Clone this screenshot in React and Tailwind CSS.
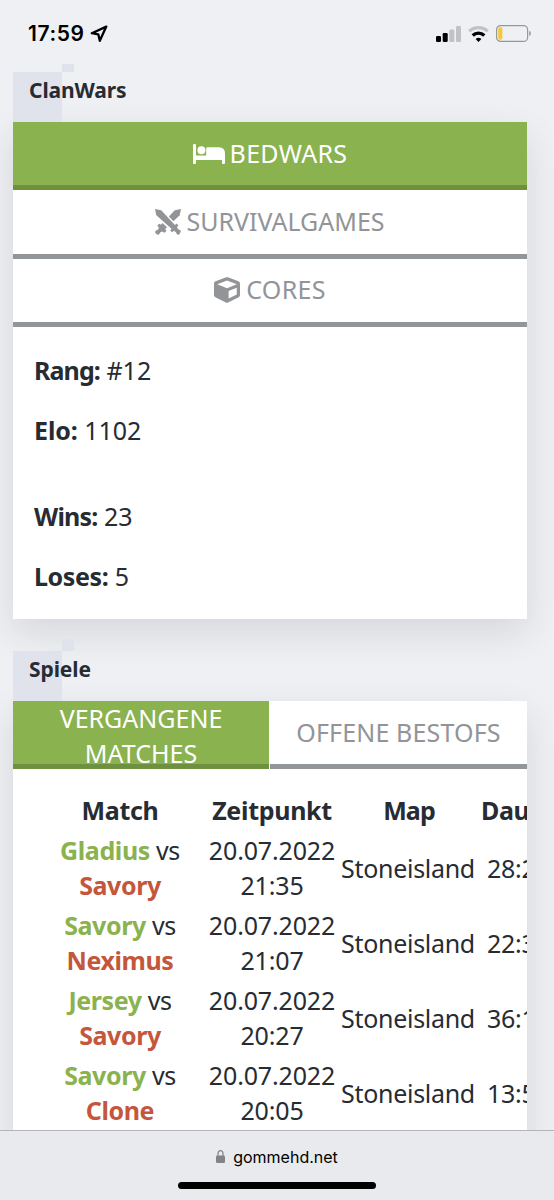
import React from 'react';
import { FaCube } from 'react-icons/fa';

const stats = [
    { label: 'Rang:', value: '#12', labelClass: 'tracking-[-0.9px]' },
    { label: 'Elo:', value: '1102', labelClass: 'tracking-[-0.1px]' },
    { label: 'Wins:', value: '23', labelClass: 'tracking-[-0.8px]' },
    { label: 'Loses:', value: '5', labelClass: 'tracking-[-0.4px]' },
];

const matches = [
    { winner: 'Gladius', loser: 'Savory', date: '20.07.2022', time: '21:35', map: 'Stoneisland', duration: '28:20' },
    { winner: 'Savory', loser: 'Neximus', date: '20.07.2022', time: '21:07', map: 'Stoneisland', duration: '22:33' },
    { winner: 'Jersey', loser: 'Savory', date: '20.07.2022', time: '20:27', map: 'Stoneisland', duration: '36:19' },
    { winner: 'Savory', loser: 'Clone', date: '20.07.2022', time: '20:05', map: 'Stoneisland', duration: '13:50' },
];

const BedIcon = () => (
    <svg className="h-5 w-8 shrink-0" viewBox="0 0 32 20" fill="currentColor">
        <path d="M0 1 Q0 0 1 0 H2 Q3 0 3 1 V11.5 H13.2 V4.2 Q13.2 3.2 14.2 3.2 H26 Q32 3.4 32 9.5 V19 Q32 20 31 20 H30 Q29 20 29 19 V16 H3 V19 Q3 20 2 20 H1 Q0 20 0 19 Z" />
        <circle cx="8.4" cy="6.3" r="4" />
    </svg>
);

const SwordsIcon = () => (
    <svg className="h-[26px] w-[26px] shrink-0" viewBox="0 0 26 26" fill="currentColor">
        <path d="M0 0 L6.2 1.2 L18.5 14.5 L20 16 L21.5 14.5 L23.3 16.3 L21.9 18.6 L23.6 20.4 L26 21.8 L25.2 23.8 L24 25.8 L22.2 25.6 L20.8 23.3 L19 21.7 L17 23.3 L15.2 21.5 L16.5 19.8 L14.8 18.2 L1.3 6.2 Z" />
        <path d="M26 0 L19.8 1.2 L13.9 7.6 L18.4 12.2 L24.7 6.2 Z" />
        <path d="M7.4 14 L12 18.3 L10.2 19.9 L11.4 22 L9.6 23.8 L7 22.4 L5.2 23.6 L3.8 25.8 L2 25.6 L0.2 23.8 L0.4 22 L2.7 20.7 L4 19 L2.3 16.6 L4.2 14.7 L6 15.7 Z" />
    </svg>
);

const StatusBar = () => (
    <div className="flex h-16 shrink-0 items-center justify-between pt-[3px] pr-[23px] pl-7 text-black">
        <div className="flex items-center gap-[5px]">
            <span className="font-[Inter,sans-serif] text-[21px] font-semibold tracking-[0.6px]">17:59</span>
            <svg className="h-[18px] w-[18px]" viewBox="0 0 18 18" fill="none" stroke="currentColor" strokeWidth="2.3" strokeLinejoin="round">
                <path d="M16.3 1.6 L1.8 8.2 L8.3 9.3 L9.8 15.8 Z" />
            </svg>
        </div>
        <div className="flex items-center">
            <svg className="h-4 w-[25px]" viewBox="0 0 25 16">
                <rect x="0" y="10" width="5" height="6" rx="1.2" />
                <rect x="6.7" y="7" width="5" height="9" rx="1.2" />
                <rect x="13.3" y="3.5" width="5" height="12.5" rx="1.2" fill="#c1c2c4" />
                <rect x="20" y="0" width="5" height="16" rx="1.2" fill="#c1c2c4" />
            </svg>
            <svg className="ml-[7px] h-4 w-[21px]" viewBox="0 0 21 16" fill="none" strokeWidth="3.3">
                <path d="M1.3 5.4 A13.2 13.2 0 0 1 19.7 5.4" stroke="#c1c2c4" />
                <path d="M4.7 9.5 A8.3 8.3 0 0 1 16.3 9.5" stroke="#000" />
                <path d="M10.5 16 L7.6 13 A4.4 4.4 0 0 1 13.4 13 Z" fill="#000" stroke="none" />
            </svg>
            <svg className="ml-[7px] h-[17px] w-[35px]" viewBox="0 0 35 17">
                <rect x="0.6" y="0.6" width="31" height="15.8" rx="4" fill="none" stroke="#97989b" strokeWidth="1.2" />
                <rect x="2.2" y="2.3" width="4.2" height="12.4" rx="1.8" fill="#f5c83c" />
                <path d="M33.2 5.8 A3 3 0 0 1 33.2 11.2 Z" fill="#97989b" />
            </svg>
        </div>
    </div>
);

const SectionTitle = ({ children }) => (
    <div className="relative flex h-[62px] items-center pl-4">
        <span className="absolute bottom-0 left-0 h-[50px] w-[49px] bg-[#e0e3eb]" />
        <span className="absolute top-0 left-[49px] h-3 w-3 bg-[#e0e3eb]" />
        <h2 className="relative text-[21px] font-bold tracking-[-0.1px]">{children}</h2>
    </div>
);

const Tab = ({ active = false, children }) => (
    <button
        className={
            active
                ? 'flex h-[68.3px] w-full items-center justify-center gap-[5px] border-b-[5px] border-[#6f903f] bg-[#8ab24f] text-white'
                : 'flex h-[68.3px] w-full items-center justify-center gap-[5px] border-b-[5px] border-[#939699] bg-white text-[#929497]'
        }
    >
        {children}
    </button>
);

const ClanWars = () => (
    <section>
        <SectionTitle>ClanWars</SectionTitle>
        <div className="h-[497px] bg-white shadow-[0_14px_34px_rgba(40,44,60,0.12)]">
            <Tab active>
                <BedIcon />
                <span className="tracking-[0.3px]">BEDWARS</span>
            </Tab>
            <Tab>
                <SwordsIcon />
                <span>SURVIVALGAMES</span>
            </Tab>
            <Tab>
                <FaCube className="h-[26px] w-[26px]" />
                <span className="pl-[1px] tracking-[0.3px]">CORES</span>
            </Tab>
            <div className="flex flex-col gap-[25px] pt-[26px] pl-[21px] leading-[35px]">
                {stats.map((stat) => (
                    <p key={stat.label} className={stat.label === 'Wins:' ? 'mt-[26px]' : ''}>
                        <b className={stat.labelClass}>{stat.label}</b> {stat.value}
                    </p>
                ))}
            </div>
        </div>
    </section>
);

const Games = () => (
    <section className="mt-[19.5px]">
        <SectionTitle>Spiele</SectionTitle>
        <div className="h-[900px] overflow-hidden bg-white shadow-[0_14px_34px_rgba(40,44,60,0.12)]">
            <div className="grid grid-cols-[256px_257px] gap-[1px] leading-[35px]">
                <Tab active>
                    <span className="w-[200px] pt-2">VERGANGENE MATCHES</span>
                </Tab>
                <Tab>
                    <span className="tracking-[0.15px]">OFFENE BESTOFS</span>
                </Tab>
            </div>
            <table className="mt-[22px] ml-[21px] w-[590px] table-fixed border-collapse text-center leading-[35px]">
                <colgroup>
                    <col className="w-[172px]" />
                    <col className="w-[132px]" />
                    <col className="w-[140px]" />
                    <col className="w-[146px]" />
                </colgroup>
                <thead>
                    <tr className="h-10">
                        <th className="tracking-[-0.3px]">Match</th>
                        <th className="tracking-[-0.3px]">Zeitpunkt</th>
                        <th className="pl-0.5 tracking-[-0.9px]">Map</th>
                        <th className="pl-[3px] text-left tracking-[-0.4px]">Dauer</th>
                    </tr>
                </thead>
                <tbody>
                    {matches.map((match) => (
                        <tr key={match.time} className="h-[75px]">
                            <td className="tracking-[-0.4px]">
                                <b className="text-[#8ab24f]">{match.winner}</b> vs
                                <br />
                                <b className="text-[#c4573b]">{match.loser}</b>
                            </td>
                            <td className="tracking-[-0.15px]">
                                {match.date}
                                <br />
                                {match.time}
                            </td>
                            <td className="tracking-[-0.3px]">{match.map}</td>
                            <td className="pl-[9px] text-left tracking-[-0.3px]">{match.duration}</td>
                        </tr>
                    ))}
                </tbody>
            </table>
        </div>
    </section>
);

const BrowserBar = () => (
    <div className="flex h-[70px] shrink-0 flex-col items-center border-t border-[#b4b5b8] bg-[#e9eaed] text-black">
        <div className="flex h-[51px] items-center gap-2 font-[Inter,sans-serif] text-[16px]">
            <svg className="h-[13px] w-[9px]" viewBox="0 0 9 13" fill="#838487">
                <rect x="0" y="5.5" width="9" height="7.5" rx="1.3" />
                <path d="M2 6 V3.5 A2.5 2.8 0 0 1 7 3.5 V6" fill="none" stroke="#838487" strokeWidth="1.2" />
            </svg>
            <span>gommehd.net</span>
        </div>
        <div className="h-[7px] w-[198px] rounded-full bg-black" />
    </div>
);

export default function App() {
    return (
        <div className="flex h-[1200px] w-[554px] flex-col overflow-hidden bg-[#eff0f3] font-['Noto_Sans','Open_Sans',sans-serif] text-[25px] text-[#272c33]">
            <StatusBar />
            <main className="flex-1 overflow-hidden pr-[27px] pl-[13px]">
                <div className="-mt-1">
                    <ClanWars />
                    <Games />
                </div>
            </main>
            <BrowserBar />
        </div>
    );
}
